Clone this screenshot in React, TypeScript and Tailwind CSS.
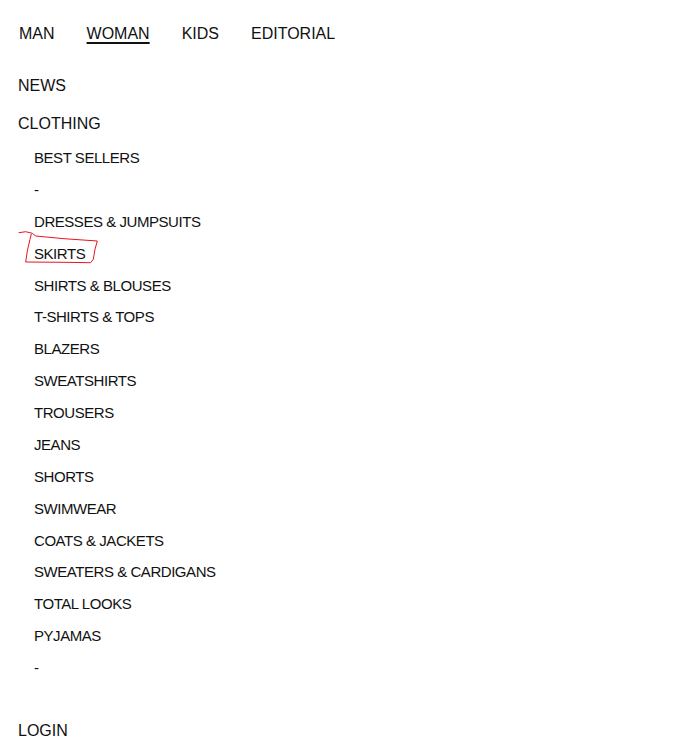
const topLinks = ['MAN', 'WOMAN', 'KIDS', 'EDITORIAL'];

const clothing = [
  'BEST SELLERS',
  '-',
  'DRESSES & JUMPSUITS',
  'SKIRTS',
  'SHIRTS & BLOUSES',
  'T-SHIRTS & TOPS',
  'BLAZERS',
  'SWEATSHIRTS',
  'TROUSERS',
  'JEANS',
  'SHORTS',
  'SWIMWEAR',
  'COATS & JACKETS',
  'SWEATERS & CARDIGANS',
  'TOTAL LOOKS',
  'PYJAMAS',
  '-',
];

export default function App() {
  return (
    <div className="relative min-h-[748px] bg-white text-[#111] font-['Liberation_Sans',Arial,sans-serif]">
      <nav className="flex gap-8 pl-[19px] pt-[22px] text-[16px] leading-6">
        {topLinks.map((link) => (
          <a
            key={link}
            href="#"
            className={
              link === 'WOMAN'
                ? 'underline decoration-[1.5px] underline-offset-[3px]'
                : ''
            }
          >
            {link}
          </a>
        ))}
      </nav>

      <div className="mt-[21px] pl-[18px]">
        <div className="text-[16px] leading-[38px]">NEWS</div>
        <div className="text-[16px] leading-[37px]">CLOTHING</div>
        <ul className="pl-4 text-[15px] tracking-[-0.03em] leading-[31.875px]">
          {clothing.map((item, i) => (
            <li key={i}>{item}</li>
          ))}
        </ul>
        <div className="mt-[35px] text-[16px] leading-6">LOGIN</div>
      </div>

      {/* hand-drawn annotation around SKIRTS */}
      <svg
        className="pointer-events-none absolute left-0 top-0"
        width="120"
        height="280"
        viewBox="0 0 120 280"
        fill="none"
      >
        <path
          d="M19 232.7 L25.7 231.7 L32.3 233.3 L35.7 236 L64 238.7 L97.3 241 L95 249.3 L93.3 259.3 L90.7 262.7 L64 262.3 L25.7 262 L27.3 251 L30 239.3 L31.3 234.3"
          stroke="#e8141b"
          strokeWidth="1"
          strokeLinejoin="round"
          strokeLinecap="round"
        />
      </svg>
    </div>
  );
}
